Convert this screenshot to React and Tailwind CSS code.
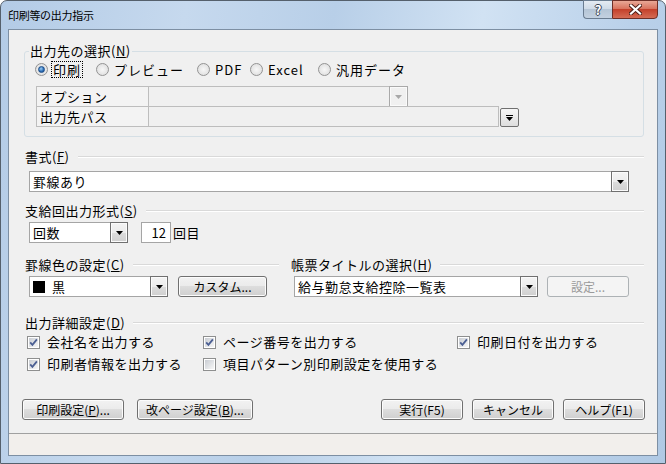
import React from "react";

const FONT = "font-['Noto_Sans_CJK_JP','Noto_Sans_CJK_JP',sans-serif]";

// small black triangle used in combo drop buttons
function Tri({ color = "#000" }) {
  return (
    <svg width="7" height="4" viewBox="0 0 7 4">
      <path d="M0 0h7L3.5 4z" fill={color} />
    </svg>
  );
}

function DropBtn() {
  return (
    <div className="self-stretch -my-px -mr-px w-[18px] shrink-0 border border-[#707070] bg-[linear-gradient(#f4f4f4_0%,#ececec_50%,#dcdcdc_51%,#d0d0d0_100%)] shadow-[inset_0_0_0_1px_#fbfbfb] flex items-center justify-center">
      <Tri />
    </div>
  );
}

function Combo({ className, children }) {
  return (
    <div className={"h-[21px] flex items-center border border-[#a5a5a5] bg-white " + className}>
      <div className="flex-1 min-w-0 flex items-center pl-[3px] text-[13px] tracking-[0.5px] leading-[17px] whitespace-nowrap">
        {children}
      </div>
      <DropBtn />
    </div>
  );
}

function Btn({ className, children, disabled }) {
  return (
    <div
      className={
        "h-[21px] rounded-[3px] border flex items-center justify-center text-[12px] leading-[16px] whitespace-nowrap " +
        (disabled
          ? "border-[#adb2b5] bg-[#f4f4f4] text-[#9a9a9a] "
          : "border-[#707070] bg-[linear-gradient(#f2f2f2_0%,#ebebeb_48%,#dddddd_50%,#cfcfcf_100%)] shadow-[inset_0_0_0_1px_#fcfcfc] ") +
        className
      }
    >
      {children}
    </div>
  );
}

function Sep({ className, children }) {
  return (
    <div className={"flex items-center h-[16px] " + className}>
      <span className="shrink-0 text-[13px] tracking-[0.5px] leading-[16px]">{children}</span>
      <div className="flex-1 ml-[8px] h-[2px] border-t border-[#d9d9d9] bg-white" />
    </div>
  );
}

function Radio({ checked, focus, label, className }) {
  return (
    <div className={"flex items-center h-[16px] " + className}>
      <div className="w-[13px] h-[13px] rounded-full border border-[#939393] bg-[radial-gradient(circle,#f7f7f7_0%,#dadada_100%)] flex items-center justify-center shrink-0">
        {checked && (
          <div className="w-[7px] h-[7px] rounded-full border border-[#1b4c87] bg-[radial-gradient(circle_at_40%_35%,#9ccff5_0%,#2a6bb5_60%,#1d4f8a_100%)]" />
        )}
      </div>
      <span
        className={
          "ml-[3px] text-[13px] tracking-[1px] leading-[15px] whitespace-nowrap " +
          (focus ? "border border-dotted border-black px-[1px]" : "px-[2px]")
        }
      >
        {label}
      </span>
    </div>
  );
}

function Check({ checked, label, className }) {
  return (
    <div className={"flex items-center h-[16px] " + className}>
      <svg width="13" height="13" viewBox="0 0 13 13" className="shrink-0">
        <defs>
          <linearGradient id="cbg" x1="0" y1="0" x2="1" y2="1">
            <stop offset="0" stopColor="#c9cdd3" />
            <stop offset="1" stopColor="#f7f7f7" />
          </linearGradient>
        </defs>
        <rect x="0.5" y="0.5" width="12" height="12" fill="#fff" stroke="#8e8f8f" />
        <rect x="2" y="2" width="9" height="9" fill="url(#cbg)" />
        {checked && (
          <path d="M3.2 6.4l2.2 2.4L9.9 3.4" stroke="#4b5f93" strokeWidth="1.8" fill="none" />
        )}
      </svg>
      <span className="ml-[7px] text-[13px] tracking-[0.5px] leading-[16px] whitespace-nowrap">{label}</span>
    </div>
  );
}

export default function App() {
  return (
    <div
      className={
        "w-[666px] h-[464px] rounded-t-[7px] border border-[#55606c] bg-[linear-gradient(100deg,#b3cbe6_0%,#c6d9ee_25%,#b8cfe8_45%,#d1e2f3_65%,#bad1ea_85%,#b0c9e4_100%)] flex flex-col px-[7px] pb-[7px] text-black " +
        FONT
      }
    >
      {/* title bar */}
      <div className="h-[28px] flex items-start justify-between shrink-0">
        <div className="pt-[6px] text-[11px] tracking-[-0.3px] leading-[16px]">印刷等の出力指示</div>
        <div className="flex -mt-px">
          <div className="w-[29px] h-[19px] rounded-bl-[4px] border border-[#6a7c90] border-r-0 bg-[linear-gradient(#e4ebf3_0%,#d0dbe7_45%,#b5c5d6_50%,#c3d1e0_100%)] flex items-center justify-center">
            <span className="text-[13px] font-bold text-white leading-none [text-shadow:1px_0_#3a4654,-1px_0_#3a4654,0_1px_#3a4654,0_-1px_#3a4654]">?</span>
          </div>
          <div className="w-[46px] h-[19px] rounded-br-[4px] border border-[#6e2f27] bg-[linear-gradient(#e9a896_0%,#d9745f_45%,#c4412b_50%,#d56c55_100%)] flex items-center justify-center">
            <svg width="13" height="11" viewBox="0 0 13 11">
              <path d="M2 1.5l9 8M11 1.5l-9 8" stroke="#4b1d16" strokeWidth="4" strokeLinecap="square" />
              <path d="M2 1.5l9 8M11 1.5l-9 8" stroke="#fff" strokeWidth="2.2" strokeLinecap="square" />
            </svg>
          </div>
        </div>
      </div>

      {/* client area */}
      <div className="flex-1 border border-[#7d8fa3] bg-[#f0f0f0] flex flex-col">
        {/* 出力先の選択 group */}
        <div className="relative mt-[21px] ml-[15px] mr-[13px] h-[86px] border border-[#d5dfe5] rounded-[3px] flex flex-col pt-[9px]">
          <div className="absolute left-[4px] -top-[9px] h-[16px] px-[1px] bg-[#f0f0f0] text-[13px] tracking-[0.5px] leading-[16px]">
            出力先の選択(<u>N</u>)
          </div>
          <div className="flex items-center ml-[10px]">
            <Radio checked focus label="印刷" className="w-[61px]" />
            <Radio label="プレビュー" className="w-[101px]" />
            <Radio label="PDF" className="w-[53px]" />
            <Radio label="Excel" className="w-[68px]" />
            <Radio label="汎用データ" />
          </div>
          <div className="mt-[9px] ml-[11px] flex flex-col text-[13px] tracking-[0.5px] leading-[16px]">
            <div className="flex h-[21px]">
              <div className="w-[113px] border border-[#bdbdbd] bg-[#f3f3f3] flex items-center pl-[3px]">オプション</div>
              <div className="w-[242px] -ml-px border border-[#bdbdbd] bg-[#f0f0f0]" />
              <div className="w-[19px] -ml-px border border-[#a9a9a9] bg-[#f0f0f0] shadow-[inset_0_0_0_1px_#fafafa] flex items-center justify-center">
                <Tri color="#a8a8a8" />
              </div>
            </div>
            <div className="flex h-[21px] -mt-px">
              <div className="w-[113px] border border-[#bdbdbd] bg-[#f3f3f3] flex items-center pl-[3px]">出力先パス</div>
              <div className="w-[351px] -ml-px border border-[#bdbdbd] bg-[#f0f0f0]" />
              <div className="ml-[1px] mt-[2px] w-[19px] h-[19px] rounded-[2px] border border-[#707070] bg-[linear-gradient(#f6f6f6,#dedede)] flex flex-col items-center justify-center gap-[1px]">
                <div className="w-[7px] h-[1px] bg-black" />
                <Tri />
              </div>
            </div>
          </div>
        </div>

        {/* 書式 */}
        <Sep className="mt-[12px] ml-[16px] mr-[13px]">
          書式(<u>F</u>)
        </Sep>
        <Combo className="mt-[6px] ml-[20px] w-[600px]">罫線あり</Combo>

        {/* 支給回出力形式 */}
        <Sep className="mt-[11px] ml-[16px] mr-[13px]">
          支給回出力形式(<u>S</u>)
        </Sep>
        <div className="mt-[3px] ml-[20px] flex items-center">
          <Combo className="w-[99px]">回数</Combo>
          <div className="ml-[13px] w-[30px] h-[21px] border border-[#a5a5a5] bg-white flex items-center justify-end pr-[4px] text-[13px] leading-[16px]">
            12
          </div>
          <span className="ml-[2px] text-[13px] tracking-[0.5px] leading-[16px]">回目</span>
        </div>

        {/* 罫線色 / 帳票タイトル */}
        <div className="mt-[14px] ml-[16px] mr-[13px] flex">
          <Sep className="w-[254px]">
            罫線色の設定(<u>C</u>)
          </Sep>
          <Sep className="ml-[12px] flex-1">
            帳票タイトルの選択(<u>H</u>)
          </Sep>
        </div>
        <div className="mt-[3px] ml-[20px] flex items-center">
          <Combo className="w-[139px]">
            <span className="w-[12px] h-[12px] bg-black mr-[7px] shrink-0" />黒
          </Combo>
          <Btn className="ml-[10px] w-[89px]">カスタム...</Btn>
          <Combo className="ml-[27px] w-[244px]">給与勤怠支給控除一覧表</Combo>
          <Btn disabled className="ml-[9px] w-[82px]">
            設定...
          </Btn>
        </div>

        {/* 出力詳細設定 */}
        <Sep className="mt-[18px] ml-[16px] mr-[13px]">
          出力詳細設定(<u>D</u>)
        </Sep>
        <div className="mt-[3px] ml-[18px] flex">
          <Check checked label="会社名を出力する" className="w-[176px]" />
          <Check checked label="ページ番号を出力する" className="w-[254px]" />
          <Check checked label="印刷日付を出力する" />
        </div>
        <div className="mt-[6px] ml-[18px] flex">
          <Check checked label="印刷者情報を出力する" className="w-[176px]" />
          <Check label="項目パターン別印刷設定を使用する" />
        </div>

        {/* buttons */}
        <div className="mt-[27px] ml-[13px] mr-[12px] flex items-center">
          <Btn className="w-[102px]">
            印刷設定(<u>P</u>)...
          </Btn>
          <Btn className="ml-[13px] w-[116px]">
            改ページ設定(<u>B</u>)...
          </Btn>
          <div className="flex-1" />
          <Btn className="w-[82px]">実行(F5)</Btn>
          <Btn className="ml-[9px] w-[82px]">キャンセル</Btn>
          <Btn className="ml-[9px] w-[82px]">ヘルプ(F1)</Btn>
        </div>

        {/* status bar */}
        <div className="mt-[13px] flex-1 border-t border-[#a0a0a0] bg-[#f2efec]" />
      </div>
    </div>
  );
}
